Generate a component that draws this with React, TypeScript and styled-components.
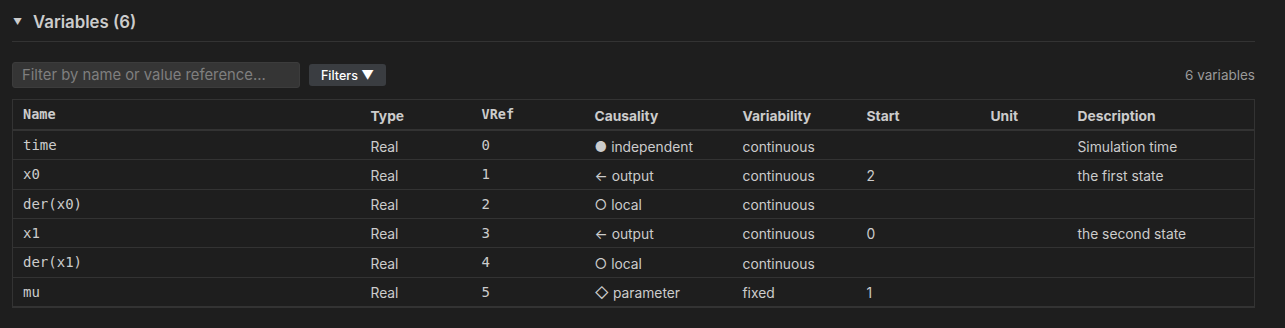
import React from "react";
import styled, { createGlobalStyle } from "styled-components";

const Global = createGlobalStyle`
  html, body { margin: 0; padding: 0; background: #1e1e1e; }
  body { font-family: Inter, "Noto Sans", sans-serif; color: #cccccc; }
`;

const Page = styled.div`
  padding: 0 30px 20px 12px;
  background: #1e1e1e;
  min-height: 328px;
  box-sizing: border-box;
`;

const SectionHeader = styled.div`
  display: flex;
  align-items: center;
  height: 20px;
  padding-top: 12px;
  padding-bottom: 9px;
  border-bottom: 1px solid #333333;
`;

const Caret = styled.span`
  font-size: 9px;
  width: 20px;
  margin-left: 1px;
  color: #cccccc;
  line-height: 20px;
`;

const Title = styled.h2`
  margin: 0;
  font-size: 16.8px;
  font-weight: 600;
  line-height: 20px;
  color: #cccccc;
`;

const Toolbar = styled.div`
  display: flex;
  align-items: center;
  gap: 9px;
  margin-top: 20px;
`;

const Search = styled.input`
  width: 288px;
  height: 26px;
  box-sizing: border-box;
  background: #353535;
  border: 1px solid #3c3c3c;
  border-radius: 3px;
  color: #cccccc;
  font-family: Inter, sans-serif;
  font-size: 14.8px;
  padding: 0 9px;
  outline: none;
  &::placeholder { color: #7f7f7f; }
`;

const FilterButton = styled.button`
  height: 22px;
  padding: 0 12px;
  background: #3a3d41;
  border: none;
  border-radius: 3px;
  color: #ffffff;
  font-family: Inter, sans-serif;
  font-size: 12.5px;
  font-weight: 500;
`;

const Count = styled.span`
  margin-left: auto;
  font-size: 13.5px;
  color: #9a9a9a;
`;

const Table = styled.table`
  margin-top: 11px;
  width: 1242px;
  table-layout: fixed;
  border-collapse: collapse;
  border: 1px solid #333333;
  border-bottom-width: 2px;
  font-size: 13.8px;
`;

const Th = styled.th<{ $mono?: boolean }>`
  text-align: left;
  padding: ${(p) => (p.$mono ? "6px 10px 7px" : "7.5px 10px 5.5px")};
  line-height: 16px;
  font-weight: 700;
  color: #cccccc;
  border-bottom: 2px solid #333333;
  white-space: nowrap;
  vertical-align: top;
  font-family: ${(p) => (p.$mono ? '"DejaVu Sans Mono", monospace' : "Inter, sans-serif")};
  font-size: ${(p) => (p.$mono ? "13.5px" : "13.8px")};
`;

const Td = styled.td<{ $mono?: boolean }>`
  text-align: left;
  padding: ${(p) => (p.$mono ? "6px 10px 5.33px" : "7.5px 10px 3.83px")};
  line-height: 17px;
  height: 17px;
  color: #cccccc;
  border-bottom: 1px solid #333333;
  white-space: nowrap;
  vertical-align: top;
  font-family: ${(p) => (p.$mono ? '"DejaVu Sans Mono", monospace' : "Inter, sans-serif")};
  font-size: ${(p) => (p.$mono ? "14px" : "13.8px")};
`;

const CausIcon = styled.span`
  display: inline-block;
  margin-right: 4px;
`;

const widths = [348, 111, 113, 148, 124, 124, 87, 187];

type Row = {
  name: string;
  vref: string;
  icon: string;
  caus: string;
  variability: string;
  start: string;
  desc: string;
};

const rows: Row[] = [
  { name: "time", vref: "0", icon: "●", caus: "independent", variability: "continuous", start: "", desc: "Simulation time" },
  { name: "x0", vref: "1", icon: "←", caus: "output", variability: "continuous", start: "2", desc: "the first state" },
  { name: "der(x0)", vref: "2", icon: "○", caus: "local", variability: "continuous", start: "", desc: "" },
  { name: "x1", vref: "3", icon: "←", caus: "output", variability: "continuous", start: "0", desc: "the second state" },
  { name: "der(x1)", vref: "4", icon: "○", caus: "local", variability: "continuous", start: "", desc: "" },
  { name: "mu", vref: "5", icon: "◇", caus: "parameter", variability: "fixed", start: "1", desc: "" },
];

export default function App() {
  return (
    <Page>
      <Global />
      <SectionHeader>
        <Caret>▼</Caret>
        <Title>Variables (6)</Title>
      </SectionHeader>
      <Toolbar>
        <Search placeholder="Filter by name or value reference..." />
        <FilterButton>Filters ▼</FilterButton>
        <Count>6 variables</Count>
      </Toolbar>
      <Table>
        <colgroup>
          {widths.map((w, i) => (
            <col key={i} style={{ width: w }} />
          ))}
        </colgroup>
        <thead>
          <tr>
            <Th $mono>Name</Th>
            <Th>Type</Th>
            <Th $mono>VRef</Th>
            <Th>Causality</Th>
            <Th>Variability</Th>
            <Th>Start</Th>
            <Th>Unit</Th>
            <Th>Description</Th>
          </tr>
        </thead>
        <tbody>
          {rows.map((r) => (
            <tr key={r.name}>
              <Td $mono>{r.name}</Td>
              <Td>Real</Td>
              <Td $mono>{r.vref}</Td>
              <Td>
                <CausIcon>{r.icon}</CausIcon>
                {r.caus}
              </Td>
              <Td>{r.variability}</Td>
              <Td>{r.start}</Td>
              <Td></Td>
              <Td>{r.desc}</Td>
            </tr>
          ))}
        </tbody>
      </Table>
    </Page>
  );
}
